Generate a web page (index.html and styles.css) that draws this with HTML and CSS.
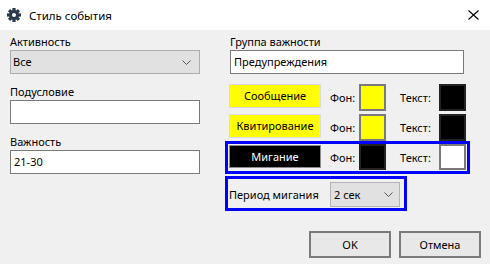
FILE: index.html
```html
<!DOCTYPE html>
<html lang="ru">
<head>
  <meta charset="UTF-8">
  <title>Стиль события</title>
  <link rel="stylesheet" href="styles.css">
</head>
<body>

  <div class="titlebar">
    <svg class="gear" width="14" height="14" viewBox="0 0 14 14">
      <g fill="#2b3a4a" transform="translate(7 7)">
        <rect x="-1.6" y="-7" width="3.2" height="14"/>
        <rect x="-1.6" y="-7" width="3.2" height="14" transform="rotate(45)"/>
        <rect x="-1.6" y="-7" width="3.2" height="14" transform="rotate(90)"/>
        <rect x="-1.6" y="-7" width="3.2" height="14" transform="rotate(135)"/>
        <circle r="5"/>
      </g>
      <circle cx="7" cy="7" r="2" fill="#fff"/>
    </svg>
    <span class="title">Стиль события</span>
    <svg class="close" width="11" height="10" viewBox="0 0 11 10">
      <path d="M0.5 0.5 L10.5 9.5 M10.5 0.5 L0.5 9.5" stroke="#000" stroke-width="1.1" fill="none"/>
    </svg>
  </div>

  <div class="content">
    <div class="left">
      <div class="label">Активность</div>
      <div class="combo">
        <span>Все</span>
        <svg class="chevron" width="9" height="5" viewBox="0 0 9 5"><path d="M0.5 0.5 L4.5 4.5 L8.5 0.5" stroke="#555" fill="none"/></svg>
      </div>

      <div class="label">Подусловие</div>
      <div class="input"></div>

      <div class="label">Важность</div>
      <div class="input">21-30</div>
    </div>

    <div class="right">
      <div class="label indent">Группа важности</div>
      <div class="input group-input">Предупреждения</div>

      <div class="style-row">
        <div class="preview yellow">Сообщение</div>
        <span class="lbl-bg">Фон:</span>
        <div class="swatch yellow"></div>
        <span class="lbl-text">Текст:</span>
        <div class="swatch black"></div>
      </div>

      <div class="style-row">
        <div class="preview yellow">Квитирование</div>
        <span class="lbl-bg">Фон:</span>
        <div class="swatch yellow"></div>
        <span class="lbl-text">Текст:</span>
        <div class="swatch black"></div>
      </div>

      <div class="highlight blink-box">
        <div class="style-row compact">
          <div class="preview dark">Мигание</div>
          <span class="lbl-bg">Фон:</span>
          <div class="swatch black"></div>
          <span class="lbl-text">Текст:</span>
          <div class="swatch white"></div>
        </div>
      </div>

      <div class="highlight period">
        <span class="period-label">Период мигания</span>
        <div class="combo small">
          <span>2 сек</span>
          <svg class="chevron" width="9" height="5" viewBox="0 0 9 5"><path d="M0.5 0.5 L4.5 4.5 L8.5 0.5" stroke="#555" fill="none"/></svg>
        </div>
      </div>
    </div>
  </div>

  <div class="actions">
    <button class="btn">OK</button>
    <button class="btn">Отмена</button>
  </div>

</body>
</html>
```

FILE: styles.css
```css
body {
  margin: 0;
  width: 490px;
  height: 264px;
  background: #f0f0f0;
  font-family: "Noto Sans", "Open Sans", sans-serif;
  font-size: 11px;
  color: #000;
  overflow: hidden;
}

.titlebar {
  height: 30px;
  background: #fff;
  display: flex;
  align-items: center;
  padding-left: 7px;
  font-size: 11.5px;
}

.gear {
  margin-right: 8px;
}

.title {
  flex: 1;
}

.close {
  margin-right: 11px;
  margin-top: -1px;
}

.content {
  display: flex;
  gap: 25px;
  padding: 4px 0 0 10px;
}

.left {
  width: 190px;
}

.right {
  width: 245px;
}

.label {
  height: 16px;
  line-height: 16px;
  margin-top: 10px;
}

.left .label:first-child,
.right .label:first-child {
  margin-top: 0;
}

.indent {
  margin-left: 5px;
}

.input {
  box-sizing: border-box;
  height: 24px;
  line-height: 22px;
  border: 1px solid #7a7a7a;
  background: #fff;
  padding-left: 3px;
}

.group-input {
  margin-left: 5px;
  width: 234px;
}

.combo {
  box-sizing: border-box;
  height: 24px;
  line-height: 22px;
  border: 1px solid #adadad;
  background: #e1e1e1;
  padding: 0 8px 0 2px;
  display: flex;
  justify-content: space-between;
  align-items: center;
}

.combo.small {
  width: 70px;
  height: 25px;
  border-color: #b4b4b4;
  padding-left: 3px;
  padding-right: 6px;
}

.style-row {
  display: flex;
  align-items: flex-start;
  height: 27px;
  margin-top: 3px;
  padding-left: 4px;
}

.right .group-input + .style-row {
  margin-top: 10px;
}

.preview {
  box-sizing: border-box;
  width: 92px;
  height: 24px;
  line-height: 22px;
  text-align: center;
  margin-right: 9px;
}

.preview.yellow {
  background: #ffff00;
  border: 1px solid #dcdcdc;
}

.preview.dark {
  background: #000;
  color: #fff;
  border: 1px solid #8c8c8c;
  height: 23px;
  line-height: 21px;
}

.lbl-bg {
  width: 29px;
  line-height: 27px;
}

.lbl-text {
  width: 39px;
  margin-left: 14px;
  line-height: 27px;
}

.swatch {
  box-sizing: border-box;
  width: 27px;
  height: 27px;
  border: 2px solid #7a7a7a;
}

.swatch.yellow {
  background: #ffff00;
}

.swatch.black {
  background: #000;
  border-color: #222;
}

.swatch.white {
  background: #fff;
}

.highlight {
  border: 3px solid #0000ff;
}

.blink-box {
  margin-top: 0;
  height: 26px;
  padding-top: 1px;
}

.style-row.compact {
  margin-top: 0;
  padding-left: 1px;
  height: 25px;
}

.compact .swatch {
  height: 26px;
  margin-top: -1px;
}

.compact .lbl-bg,
.compact .lbl-text {
  line-height: 25px;
}

.period {
  width: 175px;
  margin-top: 2px;
  height: 27px;
  padding: 2px 0 0 1px;
  box-sizing: content-box;
  display: flex;
  align-items: center;
}

.period-label {
  width: 101px;
}

.actions {
  display: flex;
  justify-content: flex-end;
  gap: 8px;
  padding-right: 9px;
  margin-top: 20px;
}

.btn {
  box-sizing: border-box;
  width: 82px;
  height: 27px;
  border: 2px solid #7a7a7a;
  background: #e8e8e8;
  font-family: inherit;
  font-size: 11px;
  color: #000;
  padding: 0;
}
```
